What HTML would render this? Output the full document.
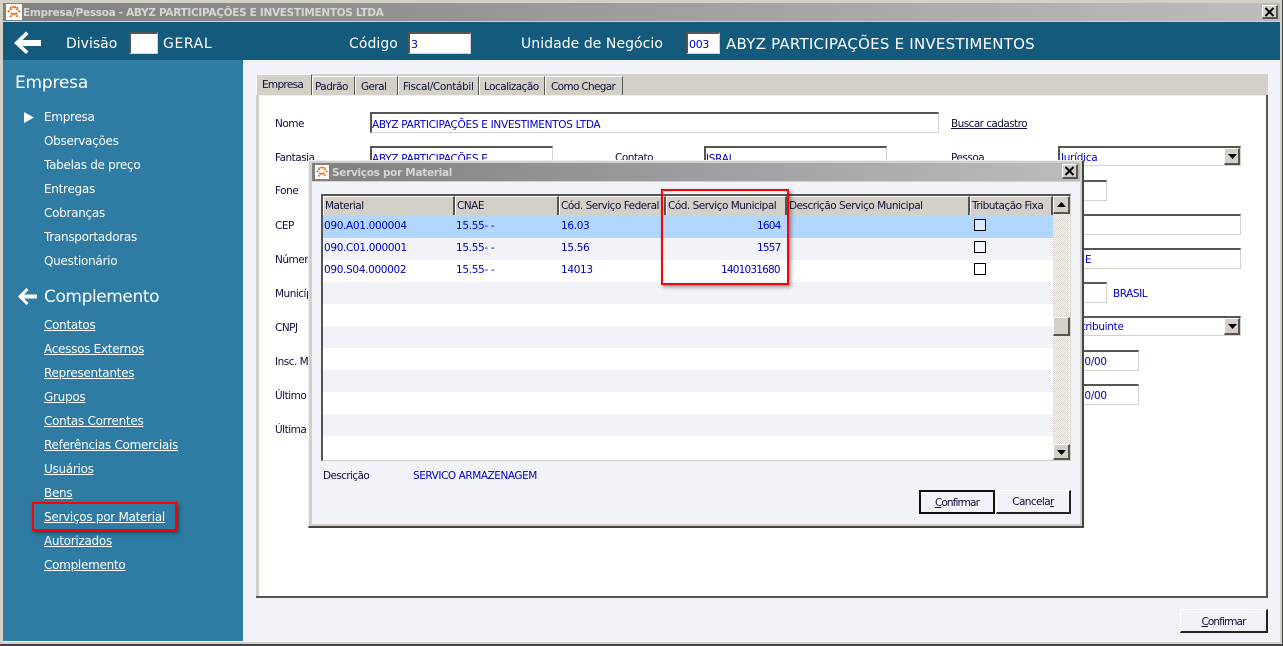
<!DOCTYPE html>
<html><head><meta charset="utf-8"><style>
html,body{margin:0;padding:0;width:1283px;height:646px;overflow:hidden;background:#f1f3f9}
body{position:relative;font-family:"DejaVu Sans","Liberation Sans",sans-serif;font-size:11px;color:#000}
div,svg{position:absolute;box-sizing:border-box}
.t{white-space:nowrap;line-height:16px;height:16px}
.s{font-size:12px;color:#fff;left:44px;letter-spacing:-.28px}
.u{text-decoration:underline}
.l{font-size:10.5px;left:275px;letter-spacing:-.5px;color:#10103a}
.b{color:#0000c0;font-size:10.5px;letter-spacing:-.3px}
.f{background:#fff;border-top:2px solid #555;border-left:2px solid #555;border-right:1px solid #d4d0c8;border-bottom:1px solid #d4d0c8}
.tab{top:76px;height:19px;background:#d4d0c8;border-right:1px solid #555;border-left:1px solid #fff;border-top:1px solid #fff;line-height:21px;font-size:10.5px;letter-spacing:-.55px;color:#10103a;white-space:nowrap}
.h{top:196px;height:19px;background:#d4d0c8;border-top:1px solid #fff;border-left:1px solid #fff;border-right:2px solid #555;font-size:10.5px;letter-spacing:-.5px;line-height:19px;color:#10103a;padding-left:1px;white-space:nowrap;overflow:hidden}
.r{left:323px;width:730px;height:22px}
.c{font-size:10.5px;color:#0000c0;letter-spacing:-.33px;white-space:nowrap;line-height:16px;height:16px}
.k{left:974px;width:12px;height:12px;border:1px solid #000}
.btn{background:#f1f3f9;border-top:1px solid #fff;border-left:1px solid #fff;border-right:2px solid #222;border-bottom:2px solid #222;text-align:center;font-size:10.5px;letter-spacing:-.9px;color:#10103a}
.sb{background:#d4d0c8;border-top:1px solid #fff;border-left:1px solid #fff;border-right:2px solid #555;border-bottom:2px solid #555}
.red{border:2px solid #f00;box-shadow:2px 2px 4px rgba(0,0,0,.4)}
.top{font-size:14px;color:#fff;top:36px}
</style></head><body>

<!-- window frame -->
<div style="left:0;top:0;width:1283px;height:646px;background:#d4d0c8;border-right:1px solid #444;border-bottom:2px solid #444"></div>
<div style="left:3px;top:3px;width:1277px;height:18px;background:linear-gradient(90deg,#808080,#bcbcbc)"></div>
<div style="left:3px;top:22px;width:1277px;height:620px;background:#f1f3f9"></div>
<div style="left:3px;top:22px;width:1277px;height:38px;background:#145a7c"></div>
<div style="left:3px;top:60px;width:240px;height:581px;background:#2e7ba3"></div>

<!-- title bar -->
<svg style="left:6px;top:4px" width="16" height="16" viewBox="0 0 16 16"><rect width="16" height="16" fill="#fff"/><path d="M2 8L8 2l6 6M4 13l4-4 4 4M5 9l1 1M11 9l-1 1M4 3l1 1M12 3l-1 1" stroke="#ee6a1c" stroke-width="2" stroke-dasharray="2 1" fill="none"/></svg>
<div class="t" style="left:23px;top:5px;font-size:10.5px;font-weight:bold;letter-spacing:-.31px;color:#d8d6d0">Empresa/Pessoa - ABYZ PARTICIPAÇÕES E INVESTIMENTOS LTDA</div>
<div class="sb" style="left:1262px;top:5px;width:16px;height:14px"></div>
<svg style="left:1264px;top:7px" width="11" height="10" viewBox="0 0 11 10"><path d="M1.500 1l8 8M9.500 1l-8 8" stroke="#000" stroke-width="2"/></svg>

<!-- top bar -->
<svg style="left:13px;top:31px" width="29" height="25" viewBox="0 0 29 25"><path d="M1 13L13 1.500L15.500 4L9.500 10H28V16H9.500L15.500 21.500L13 24Z" fill="#fff" transform="translate(0 -1)"/></svg>
<div class="t top" style="left:66px">Divisão</div>
<div class="f" style="left:129px;top:32px;width:29px;height:22px"></div>
<div class="t top" style="left:163px;letter-spacing:.6px">GERAL</div>
<div class="t top" style="left:349px;letter-spacing:.05px">Código</div>
<div class="f" style="left:408px;top:32px;width:63px;height:22px"></div>
<div class="t b" style="left:411px;top:37px;font-size:11px">3</div>
<div class="t top" style="left:521px;letter-spacing:.05px">Unidade de Negócio</div>
<div class="f" style="left:686px;top:32px;width:34px;height:22px"></div>
<div class="t b" style="left:689px;top:37px;font-size:11px">003</div>
<div class="t top" style="left:726px;font-size:15px;letter-spacing:.23px">ABYZ PARTICIPAÇÕES E INVESTIMENTOS</div>

<!-- sidebar -->
<div class="t" style="left:15px;top:74px;height:18px;line-height:18px;font-size:17px;color:#fff;letter-spacing:-.2px">Empresa</div>
<svg style="left:24px;top:112px" width="11" height="11"><path d="M0 0L10 5.500L0 11Z" fill="#fff"/></svg>
<div class="t s" style="top:109px">Empresa</div>
<div class="t s" style="top:133px">Observações</div>
<div class="t s" style="top:157px">Tabelas de preço</div>
<div class="t s" style="top:181px">Entregas</div>
<div class="t s" style="top:205px">Cobranças</div>
<div class="t s" style="top:229px">Transportadoras</div>
<div class="t s" style="top:253px">Questionário</div>
<svg style="left:17px;top:287px" width="21" height="19" viewBox="0 0 21 19"><path d="M1 9.500L9.500 1L11.500 3L7 7.500H20V11.500H7L11.500 16L9.500 18Z" fill="#fff"/></svg>
<div class="t" style="left:44px;top:288px;height:18px;line-height:18px;font-size:17px;color:#fff;letter-spacing:-.42px">Complemento</div>
<div class="t s u" style="top:317px">Contatos</div>
<div class="t s u" style="top:341px">Acessos Externos</div>
<div class="t s u" style="top:365px">Representantes</div>
<div class="t s u" style="top:389px">Grupos</div>
<div class="t s u" style="top:413px">Contas Correntes</div>
<div class="t s u" style="top:437px">Referências Comerciais</div>
<div class="t s u" style="top:461px">Usuários</div>
<div class="t s u" style="top:485px">Bens</div>
<div class="t s u" style="top:509px">Serviços por Material</div>
<div class="t s u" style="top:533px">Autorizados</div>
<div class="t s u" style="top:557px">Complemento</div>
<div class="red" style="left:32px;top:502px;width:145px;height:29px"></div>

<!-- tab panel -->
<div style="left:256px;top:74px;width:1012px;height:524px;background:#d4d0c8;border-bottom:2px solid #555"></div>
<div style="left:259px;top:96px;width:1007px;height:500px;background:#fff"></div>
<div style="left:1266px;top:95px;width:2px;height:503px;background:#555"></div>
<div style="left:259px;top:95px;width:1007px;height:1px;background:#eee"></div>
<div style="left:256px;top:74px;width:56px;height:21px;background:#d4d0c8;border-top:1px solid #fff;border-left:1px solid #fff;border-right:1px solid #555"></div>
<div class="t" style="left:262px;top:77px;font-size:10.5px;letter-spacing:-.7px;color:#10103a">Empresa</div>
<div class="tab" style="left:312px;width:43px;padding-left:2px">Padrão</div>
<div class="tab" style="left:355px;width:43px;padding-left:5px;letter-spacing:-.6px">Geral</div>
<div class="tab" style="left:398px;width:81px;padding-left:4px;letter-spacing:-.35px">Fiscal/Contábil</div>
<div class="tab" style="left:479px;width:66px;padding-left:4px">Localização</div>
<div class="tab" style="left:545px;width:78px;padding-left:5px;letter-spacing:-.68px">Como Chegar</div>

<!-- form -->
<div class="t l" style="top:116px">Nome</div>
<div class="f" style="left:370px;top:112px;width:569px;height:21px"></div>
<div class="t b" style="left:372px;top:117px">ABYZ PARTICIPAÇÕES E INVESTIMENTOS LTDA</div>
<div class="t u" style="left:951px;top:116px;font-size:10.5px;letter-spacing:-.57px;color:#10103a">Buscar cadastro</div>
<div class="t l" style="top:150px">Fantasia</div>
<div class="f" style="left:370px;top:146px;width:183px;height:21px"></div>
<div class="t b" style="left:372px;top:151px">ABYZ PARTICIPAÇÕES E</div>
<div class="t l" style="left:615px;top:150px">Contato</div>
<div class="f" style="left:704px;top:146px;width:183px;height:21px"></div>
<div class="t b" style="left:706px;top:151px">ISRAL</div>
<div class="t l" style="left:951px;top:150px">Pessoa</div>
<div class="f" style="left:1058px;top:146px;width:183px;height:20px"></div>
<div class="t b" style="left:1061px;top:150px">Jurídica</div>
<div class="sb" style="left:1224px;top:148px;width:16px;height:17px"></div>
<svg style="left:1228px;top:154px" width="9" height="5"><path d="M0 0H9L4.500 5Z" fill="#000"/></svg>
<div class="t l" style="top:183px">Fone</div>
<div class="f" style="left:1060px;top:180px;width:47px;height:21px"></div>
<div class="t l" style="top:218px">CEP</div>
<div class="f" style="left:1060px;top:214px;width:181px;height:21px"></div>
<div class="t l" style="top:252px">Número</div>
<div class="f" style="left:1060px;top:248px;width:181px;height:21px"></div>
<div class="t b" style="left:1085px;top:252px">E</div>
<div class="t l" style="top:286px">Município</div>
<div class="f" style="left:1060px;top:282px;width:47px;height:21px"></div>
<div class="t b" style="left:1113px;top:286px;letter-spacing:-.45px">BRASIL</div>
<div class="t l" style="top:320px">CNPJ</div>
<div class="f" style="left:1060px;top:316px;width:181px;height:20px"></div>
<div class="t b" style="left:1062px;top:319px">Contribuinte</div>
<div class="sb" style="left:1224px;top:318px;width:16px;height:17px"></div>
<svg style="left:1228px;top:324px" width="9" height="5"><path d="M0 0H9L4.500 5Z" fill="#000"/></svg>
<div class="t l" style="top:354px">Insc. Municipal</div>
<div class="f" style="left:1060px;top:350px;width:79px;height:21px"></div>
<div class="t b" style="left:1062px;top:354px">00/00/00</div>
<div class="t l" style="top:388px">Último</div>
<div class="f" style="left:1060px;top:384px;width:79px;height:21px"></div>
<div class="t b" style="left:1062px;top:388px">00/00/00</div>
<div class="t l" style="top:422px">Última</div>

<div class="btn" style="left:1180px;top:609px;width:88px;height:24px;line-height:24px"><span class="u">C</span>onfirmar</div>

<!-- dialog -->
<div style="left:308px;top:160px;width:776px;height:368px;background:#d4d0c8;border-right:2px solid #444;border-bottom:2px solid #444;border-top:1px solid #eee;border-left:1px solid #eee"></div>
<div style="left:312px;top:182px;width:768px;height:342px;background:#f1f3f9"></div>
<div style="left:312px;top:163px;width:768px;height:18px;background:linear-gradient(90deg,#808080,#bcbcbc)"></div>
<svg style="left:315px;top:165px" width="14" height="14" viewBox="0 0 16 16"><rect width="16" height="16" fill="#fff"/><path d="M2 8L8 2l6 6M4 13l4-4 4 4M5 9l1 1M11 9l-1 1M4 3l1 1M12 3l-1 1" stroke="#ee6a1c" stroke-width="2" stroke-dasharray="2 1" fill="none"/></svg>
<div class="t" style="left:332px;top:165px;font-size:10.5px;font-weight:bold;letter-spacing:-.3px;color:#d8d6d0">Serviços por Material</div>
<div class="sb" style="left:1062px;top:164px;width:16px;height:15px"></div>
<svg style="left:1064px;top:166px" width="11" height="10" viewBox="0 0 11 10"><path d="M1.500 1l8 8M9.500 1l-8 8" stroke="#000" stroke-width="2"/></svg>

<!-- grid -->
<div style="left:321px;top:194px;width:750px;height:267px;background:#fff;border-top:2px solid #555;border-left:2px solid #555;border-right:1px solid #d4d0c8;border-bottom:1px solid #d4d0c8"></div>
<div class="r" style="top:215px;background:#b2d7ff;height:23px"></div>
<div class="r" style="top:238px;background:#f1f3f9"></div>
<div class="r" style="top:282px;background:#f1f3f9"></div>
<div class="r" style="top:326px;background:#f1f3f9"></div>
<div class="r" style="top:370px;background:#f1f3f9"></div>
<div class="r" style="top:414px;background:#f1f3f9"></div>
<div style="left:323px;top:214px;width:730px;height:1px;background:#555"></div>
<div class="h" style="left:323px;width:132px">Material</div>
<div class="h" style="left:455px;width:104px">CNAE</div>
<div class="h" style="left:559px;width:107px">Cód. Serviço Federal</div>
<div class="h" style="left:666px;width:121px">Cód. Serviço Municipal</div>
<div class="h" style="left:787px;width:183px">Descrição Serviço Municipal</div>
<div class="h" style="left:970px;width:83px">Tributação Fixa</div>

<div class="c" style="left:324px;top:218px">090.A01.000004</div><div class="c" style="left:456px;top:218px">15.55- -</div><div class="c" style="left:561px;top:218px">16.03</div><div class="c" style="left:757px;top:218px;letter-spacing:-.8px">1604</div><div class="k" style="top:219px;background:#dcecff"></div>
<div class="c" style="left:324px;top:240px">090.C01.000001</div><div class="c" style="left:456px;top:240px">15.55- -</div><div class="c" style="left:561px;top:240px">15.56</div><div class="c" style="left:757px;top:240px;letter-spacing:-.8px">1557</div><div class="k" style="top:241px;background:#f1f3f9"></div>
<div class="c" style="left:324px;top:262px">090.S04.000002</div><div class="c" style="left:456px;top:262px">15.55- -</div><div class="c" style="left:561px;top:262px">14013</div><div class="c" style="left:721px;top:262px;letter-spacing:-.8px">1401031680</div><div class="k" style="top:263px;background:#fff"></div>

<!-- scrollbar -->
<div style="left:1053px;top:196px;width:16px;height:264px;background:repeating-conic-gradient(#d4d0c8 0 25%,#fff 0 50%) 0 0/2px 2px"></div>
<div class="sb" style="left:1053px;top:196px;width:17px;height:18px"></div>
<svg style="left:1057px;top:202px" width="9" height="5"><path d="M0 5H9L4.500 0Z" fill="#000"/></svg>
<div class="sb" style="left:1053px;top:317px;width:17px;height:19px"></div>
<div class="sb" style="left:1053px;top:444px;width:17px;height:16px"></div>
<svg style="left:1057px;top:450px" width="9" height="5"><path d="M0 0H9L4.500 5Z" fill="#000"/></svg>

<div class="red" style="left:661px;top:189px;width:128px;height:96px"></div>

<div class="t l" style="left:323px;top:468px;letter-spacing:-.6px">Descrição</div>
<div class="t b" style="left:413px;top:468px;letter-spacing:-.45px">SERVICO ARMAZENAGEM</div>
<div class="btn" style="left:919px;top:490px;width:76px;height:24px;line-height:22px;border:2px solid #111"><span class="u">C</span>onfirmar</div>
<div class="btn" style="left:996px;top:490px;width:75px;height:24px;line-height:23px;letter-spacing:-.6px">Cancela<span class="u">r</span></div>
</body></html>
